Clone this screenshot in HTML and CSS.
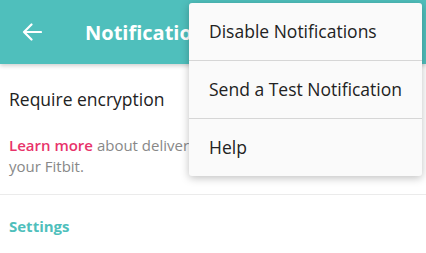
FILE: index.html
```html
<!DOCTYPE html>
<html lang="en">
<head>
    <meta charset="UTF-8">
    <meta name="viewport" content="width=device-width, initial-scale=1.0">
    <title>Notifications</title>
    <link rel="stylesheet" href="styles.css">
</head>
<body>
    <div class="screen">
        <header class="toolbar">
            <button class="back" aria-label="Back">
                <svg width="20" height="18" viewBox="0 0 20 18">
                    <path d="M19 9H2M9.5 1.5L2 9l7.5 7.5" fill="none" stroke="#fff" stroke-width="2.2" stroke-linecap="round" stroke-linejoin="round"/>
                </svg>
            </button>
            <h1>Notifications</h1>
        </header>

        <div class="row">Require encryption</div>

        <p class="info">
            <a href="#" class="learn">Learn more</a> about delivering notifications securely to<br>
            your Fitbit.
        </p>

        <div class="section">Settings</div>

        <ul class="menu">
            <li>Disable Notifications</li>
            <li>Send a Test Notification</li>
            <li>Help</li>
        </ul>
    </div>
</body>
</html>
```

FILE: styles.css
```css
body {
    margin: 0;
    font-family: "Open Sans", Arial, sans-serif;
    background-color: #fff;
}

.screen {
    position: relative;
    width: 426px;
    height: 253px;
    overflow: hidden;
}

.toolbar {
    height: 64px;
    background-color: #4fbfbc;
    display: flex;
    align-items: center;
    box-shadow: 0 2px 4px rgba(0, 0, 0, 0.18);
}

.back {
    background: none;
    border: none;
    padding: 0;
    margin: 0 0 0 22px;
    width: 20px;
    height: 18px;
    display: flex;
}

.toolbar h1 {
    margin: 0 0 0 43px;
    color: #fff;
    font-size: 20px;
    font-weight: 700;
    white-space: nowrap;
}

.row {
    padding: 23px 9px 0;
    font-size: 17.5px;
    color: #222;
    height: 37px;
}

.info {
    margin: 0;
    padding: 11px 9px 0;
    font-size: 15px;
    line-height: 21px;
    color: #888;
    height: 59px;
    border-bottom: 1px solid #ebebeb;
    white-space: nowrap;
}

.learn {
    color: #e8336b;
    font-weight: 600;
    text-decoration: none;
}

.section {
    padding: 21px 9px 0;
    font-size: 15px;
    font-weight: 700;
    color: #4fbfbc;
}

.menu {
    position: absolute;
    top: 3px;
    left: 189px;
    width: 233px;
    margin: 0;
    padding: 0;
    list-style: none;
    background-color: #fafafa;
    border-radius: 3px;
    box-shadow: 0 2px 8px rgba(0, 0, 0, 0.25);
}

.menu li {
    height: 57px;
    line-height: 57px;
    padding-left: 20px;
    font-size: 17.5px;
    color: #222;
    border-bottom: 1.5px solid #d6d6d6;
}

.menu li:last-child {
    border-bottom: none;
}
```
